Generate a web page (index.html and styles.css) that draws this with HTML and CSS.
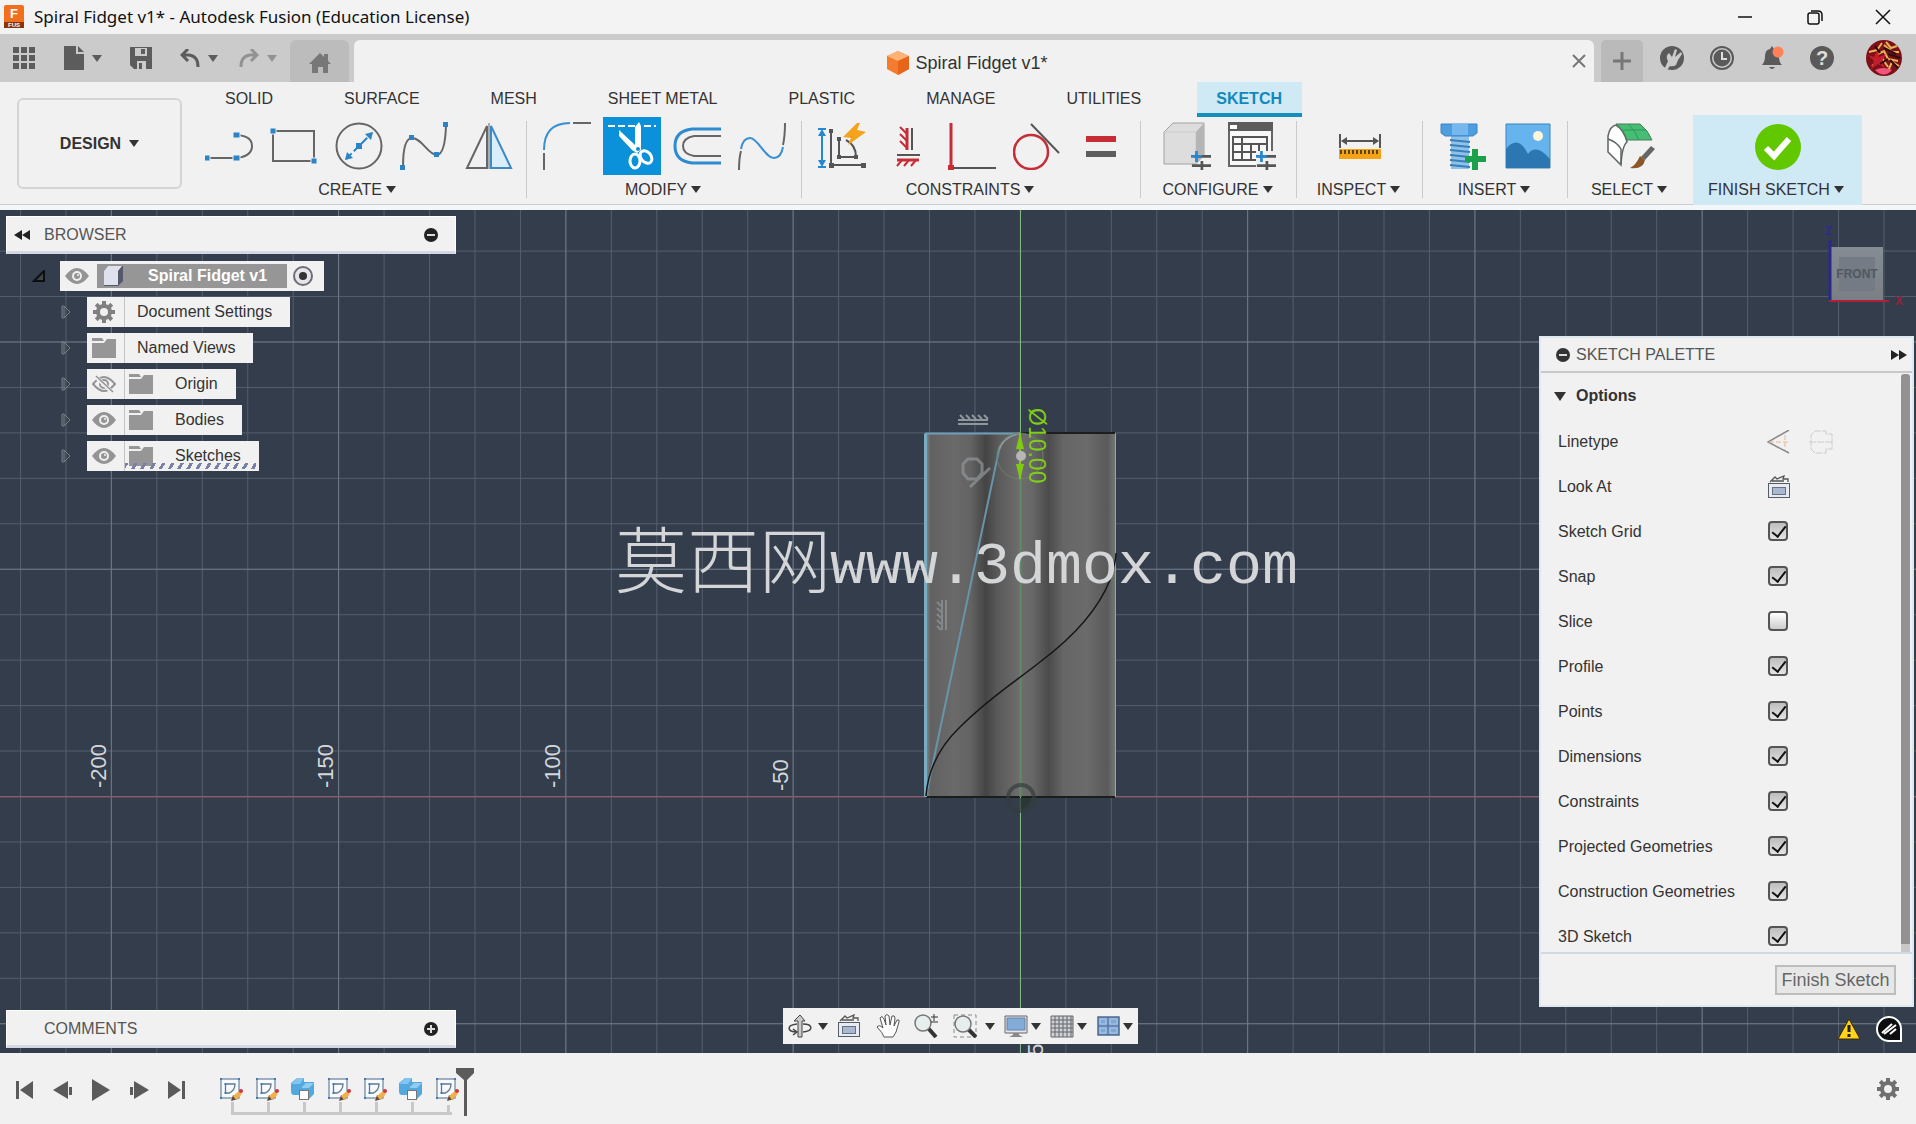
FILE: index.html
```html
<!DOCTYPE html>
<html lang="en">
<head>
<meta charset="utf-8">
<title>Spiral Fidget v1* - Autodesk Fusion</title>
<link rel="stylesheet" href="styles.css">
</head>
<body>
<svg class="defs" aria-hidden="true">
  <symbol id="eye" viewBox="0 0 24 16"><path d="M0 8Q6 0 12 0T24 8Q18 16 12 16T0 8Z" fill="#949494"/><circle cx="12" cy="8" r="5" fill="#f0f0f0"/><circle cx="12" cy="8" r="3" fill="#949494"/><circle cx="13" cy="7" r="1" fill="#f0f0f0"/></symbol>
  <symbol id="eye-off" viewBox="0 0 24 18"><path d="M1 9Q7 2 12 2T23 9Q17 16 12 16T1 9Z" fill="none" stroke="#949494" stroke-width="2"/><circle cx="12" cy="9" r="4" fill="none" stroke="#949494" stroke-width="2"/><path d="M3 1L20 17" stroke="#f0f0f0" stroke-width="4"/><path d="M4 1L21 17" stroke="#949494" stroke-width="1.500"/></symbol>
  <symbol id="folder" viewBox="0 0 24 20"><path d="M0 0h10l2 3H0zM0 5h12l3-4h9v19H0z" fill="#969696"/></symbol>
  <symbol id="gear" viewBox="0 0 24 24"><path d="M10 1h4v4h-4zM10 19h4v4h-4zM1 10h4v4H1zM19 10h4v4h-4z"/><path d="M10 1h4v4h-4zM10 19h4v4h-4zM1 10h4v4H1zM19 10h4v4h-4z" transform="rotate(45 12 12)"/><path fill-rule="evenodd" d="M12 4a8 8 0 1 0 0 16a8 8 0 1 0 0-16zM12 8a4 4 0 1 1 0 8a4 4 0 1 1 0-8z"/></symbol>
  <symbol id="lookat" viewBox="0 0 24 24"><rect x="1.500" y="8.500" width="21" height="14" fill="#e8ecf2" stroke="#555c66"/><rect x="5.500" y="12.500" width="13" height="7" fill="#a9b9d2" stroke="#68717f"/><path d="M3 7L8 2l2 2L17 1l-1 3h5v3M5 6h12" fill="none" stroke="#555" stroke-width="1.300"/></symbol>
  <symbol id="tl-sketch" viewBox="0 0 24 24"><rect x="2" y="2" width="18" height="19" fill="#f7fbff" stroke="#7589a0" stroke-width="1.300"/><path d="M6.500 7v9h4Q16 13 16 7z" fill="none" stroke="#64788a" stroke-width="1.300"/><path d="M1 1h2v2H1zM19 1h2v2h-2zM1 20h2v2H1zM5.500 6h2v2h-2zM5.500 15h2v2h-2z" fill="#3f7cb8"/><path d="M12 24l2-6 5 4z" fill="#5c4a3a"/><path d="M14 19l6-5 3 3-6 6z" fill="#f3b04a"/><circle cx="22" cy="14" r="2" fill="#cf3440"/></symbol>
  <symbol id="tl-body" viewBox="0 0 24 24"><path d="M0 6l6-5h7v4h10v12l-5 5H9v-4H3q-3 0-3-4z" fill="#51a9e0"/><path d="M0 7l6-6h7L9 7z" fill="#83c5ee"/><path d="M11 10l4-4h8l-5 5h-7z" fill="#90cdf2"/><rect x="8.500" y="13.500" width="9" height="9" fill="#fff" stroke="#777"/></symbol>
  <symbol id="param" viewBox="0 0 22 22"><path d="M3 6h19M1 16h21" stroke="#555" stroke-width="3"/><path d="M6 0v12M0 6h12" stroke="#2a86cc" stroke-width="3"/><path d="M12 11v11" stroke="#555" stroke-width="3"/></symbol>
</svg>

<header class="titlebar">
  <svg class="app-logo" width="22" height="26" viewBox="0 0 22 26"><rect x="1" y="1" width="20" height="23" rx="2" fill="#f2701b"/><path d="M1 18h20v6H1z" fill="#8a3407"/><text x="7" y="14" class="logo-letter">F</text><text x="5" y="23" class="logo-sub">FUS</text></svg>
  <h1>Spiral Fidget v1* - Autodesk Fusion (Education License)</h1>
  <div class="window-buttons">
    <button type="button" aria-label="Minimize"><svg width="16" height="16"><path d="M1 8h14" stroke="#111" stroke-width="1.500"/></svg></button>
    <button type="button" aria-label="Restore"><svg width="16" height="16" fill="none" stroke="#111" stroke-width="1.500"><rect x="1" y="4" width="11" height="11" rx="2"/><path d="M4 2h7q4 0 4 4v6"/></svg></button>
    <button type="button" aria-label="Close"><svg width="16" height="16"><path d="M1 1l14 14M15 1L1 15" stroke="#111" stroke-width="1.500"/></svg></button>
  </div>
</header>

<nav class="appbar">
  <div class="quick">
    <button type="button" aria-label="Data panel"><svg width="22" height="22" fill="#5c5c5c"><path d="M0 0h6v6H0zM8 0h6v6H8zM16 0h6v6h-6zM0 8h6v6H0zM8 8h6v6H8zM16 8h6v6h-6zM0 16h6v6H0zM8 16h6v6H8zM16 16h6v6h-6z"/></svg></button>
    <button type="button" class="with-caret file" aria-label="File"><svg width="20" height="24" fill="#5c5c5c"><path d="M0 0h12v8h8v16H0zM14 0l6 6h-6z"/></svg><i class="caret"></i></button>
    <button type="button" class="save" aria-label="Save"><svg width="22" height="22"><path d="M0 0h22v22H4l-4-4z" fill="#5c5c5c"/><path d="M5 1h12v8H5zM7 14h9v8H7z" fill="#cbcbcb"/><path d="M11 2h4v5h-4zM9 16h3v6H9z" fill="#5c5c5c"/></svg></button>
    <button type="button" class="with-caret" aria-label="Undo"><svg width="20" height="18" fill="none" stroke="#5c5c5c" stroke-width="3"><path d="M8 0L2 6l6 6M2 6h7q9 1 9 12"/></svg><i class="caret"></i></button>
    <button type="button" class="with-caret redo" aria-label="Redo"><svg width="20" height="18" fill="none" stroke="#929292" stroke-width="3"><path d="M12 0l6 6-6 6M18 6h-7Q2 7 2 18"/></svg><i class="caret"></i></button>
  </div>
  <button type="button" class="home" aria-label="Home"><svg width="22" height="22" fill="#777"><path d="M0 12L11 1l4 4V2h4v7l3 3h-3v9h-5v-6H9v6H3v-9z"/></svg></button>
  <div class="doc-tab">
    <div class="doc-name"><svg width="24" height="26" viewBox="0 0 24 26"><path d="M1 6L12 1l11 5v13l-11 6L1 19z" fill="#f47c2e"/><path d="M1 6L12 1l11 5-11 5z" fill="#fdb375"/><path d="M12 11l11-5v13l-11 6z" fill="#e76418"/></svg><span>Spiral Fidget v1*</span></div>
    <button type="button" aria-label="Close tab"><svg width="14" height="14"><path d="M1 1l12 12M13 1L1 13" stroke="#777" stroke-width="2"/></svg></button>
  </div>
  <button type="button" class="new-tab" aria-label="New tab"><svg width="20" height="20"><path d="M10 1v18M1 10h18" stroke="#777" stroke-width="3"/></svg></button>
  <div class="status">
    <button type="button" aria-label="Extensions"><svg width="24" height="24"><circle cx="12" cy="12" r="12" fill="#5a5a5a"/><path d="M4 24l4-9q-3-5 1-8l3 4 3-8 2 1-2 7 6-5 1 2-4 6-2 5q-3 2-6 1l-3 4z" fill="#cbcbcb"/></svg></button>
    <button type="button" aria-label="Job status"><svg width="24" height="24" fill="none"><circle cx="12" cy="12" r="11" stroke="#5a5a5a" stroke-width="2"/><circle cx="12" cy="12" r="8.500" fill="#5a5a5a"/><path d="M12 6v7h5" stroke="#ddd" stroke-width="2"/></svg></button>
    <button type="button" aria-label="Notifications"><svg width="24" height="24"><path d="M2 19q3-3 3-9 0-6 5-7l2-3 2 3q5 2 5 8 0 5 3 8zM9 21h6q-3 4-6 0z" fill="#5a5a5a"/><circle cx="18" cy="6" r="5.500" fill="#ff8157"/></svg></button>
    <button type="button" aria-label="Help"><svg width="24" height="24"><circle cx="12" cy="12" r="12" fill="#5a5a5a"/><text x="12" y="19" class="help-mark">?</text></svg></button>
    <button type="button" class="avatar" aria-label="Account"><svg width="36" height="36"><circle cx="18" cy="18" r="18" fill="#7d1019"/><path d="M20 2l5 6 6-2M18 5l8 7 7 0M3 12l8-2 5-7M10 15l8-4 4 8 10 2M6 26l10-8 6 9M22 31l4-9 7 4" fill="none" stroke="#e9b35a" stroke-width="2"/><path d="M2 15l6 2 4-8 1 8 7-3-4 7 3 7-7-4-7 5 3-8z" fill="#c41e2c"/><path d="M18 8l12 6M22 14l12 4M24 20l8 8M9 6l5 7M14 24l8-5" stroke="#2c0c0c" stroke-width="2"/><path d="M9 30q8-4 17 0-8 9-17 0z" fill="#f0567d"/></svg></button>
  </div>
</nav>

<section class="ribbon">
  <div class="workspace"><button type="button">DESIGN<i class="caret"></i></button></div>
  <div class="ribbon-main">
    <div class="tabs">
      <button type="button">SOLID</button><button type="button">SURFACE</button><button type="button">MESH</button><button type="button">SHEET METAL</button><button type="button">PLASTIC</button><button type="button">MANAGE</button><button type="button">UTILITIES</button><button type="button" class="active">SKETCH</button>
    </div>
    <div class="groups">
      <div class="group create">
        <div class="tools">
          <button type="button" aria-label="Line"><svg width="48" height="48"><path d="M2 36h30q15-2 15-12T32 13" fill="none" stroke="#666" stroke-width="2"/><path d="M-1 33h6v6h-6zM28 33h7v6h-7zM28 10h7v6h-7z" fill="#2a84c6" stroke="#f0f0f0"/></svg></button>
          <button type="button" aria-label="Rectangle"><svg width="48" height="48"><path d="M3 9h41v30H3z" fill="none" stroke="#666" stroke-width="2"/><path d="M0 6h6v6H0zM41 36h6v6h-6z" fill="#2a84c6" stroke="#f0f0f0"/></svg></button>
          <button type="button" aria-label="Circle"><svg width="48" height="48"><circle cx="24" cy="24" r="22.500" fill="none" stroke="#666" stroke-width="2"/><path d="M11 37l26-26" stroke="#2a84c6" stroke-width="2" stroke-dasharray="8 3"/><path d="M38 10l-2 8-6-6zM10 38l2-8 6 6zM21 21h6v6h-6z" fill="#2a84c6"/></svg></button>
          <button type="button" aria-label="Spline"><svg width="48" height="48"><path d="M3 45Q3 16 12 16C22 16 28 33 37 33Q45 32 46 4" fill="none" stroke="#666" stroke-width="2"/><path d="M0 43h5v5H0zM9 13h5v5H9zM34 30h5v5h-5zM43 0h5v5h-5z" fill="#2a84c6"/></svg></button>
          <button type="button" aria-label="Mirror"><svg width="48" height="48"><path d="M22 4v42H2z" fill="none" stroke="#666" stroke-width="2"/><path d="M26 4v42h20z" fill="#d9edfb" stroke="#3d8bc2" stroke-width="2"/><path d="M24 1v46" stroke="#666"/></svg></button>
        </div>
        <button type="button" class="label">CREATE<i class="caret"></i></button>
      </div>
      <div class="group modify">
        <div class="tools">
          <button type="button" aria-label="Fillet"><svg width="48" height="48" fill="none" stroke-width="2"><path d="M1 28Q1 1 27 1" stroke="#3a8fd0"/><path d="M1 31v17M30 1h18" stroke="#666"/></svg></button>
          <button type="button" class="selected" aria-label="Trim"><svg width="48" height="48"><path d="M0 4h27M36 4h12" stroke="#fff" stroke-width="2" stroke-dasharray="7 3"/><path d="M27 5l4-5 2 4v24l-4 3-5-3L11 14V8l16 15z" fill="#fff"/><g fill="none" stroke="#fff" stroke-width="3"><ellipse cx="27" cy="39" rx="5" ry="7"/><ellipse cx="38" cy="35" rx="5" ry="7" transform="rotate(-40 38 35)"/></g><circle cx="30" cy="27" r="2" fill="#0b91d9"/></svg></button>
          <button type="button" aria-label="Offset"><svg width="48" height="48" fill="none"><path d="M48 7H19Q2 9 2 24t17 17h29" stroke="#2f8bd0" stroke-width="3"/><path d="M48 14H21q-11 2-11 10t11 10h27" stroke="#666" stroke-width="2"/></svg></button>
          <button type="button" aria-label="Extend curve"><svg width="48" height="48" fill="none" stroke-width="2"><path d="M1 48q0-12 2-19M45 23Q47 14 47 1" stroke="#666"/><path d="M3 27Q5 16 12 16C20 16 27 36 36 36Q43 36 45 25" stroke="#3a8fd0"/></svg></button>
        </div>
        <button type="button" class="label">MODIFY<i class="caret"></i></button>
      </div>
      <div class="group constraints">
        <div class="tools">
          <button type="button" aria-label="Dimension"><svg width="48" height="48" fill="none"><path d="M4 10v32M0 7h8M0 45h8" stroke="#2488d0" stroke-width="2"/><path d="M4 7l4 7H0zM4 45l4-7H0z" fill="#2488d0"/><path d="M13 9v34h33M21 17v18h17Q38 23 28 18" stroke="#555" stroke-width="2"/><path d="M11 7h4v4h-4zM11 41h5v5h-5zM43 41h5v5h-5zM19 15h4v4h-4zM19 33h4v4h-4zM36 33h4v4h-4z" fill="#555"/><path d="M39 1L25 15l8 1-3 7 18-13-9-2 3-7z" fill="#f5a31a"/></svg></button>
          <button type="button" aria-label="Horizontal/Vertical"><svg width="48" height="48"><path d="M24 6v22" stroke="#c62d37" stroke-width="3"/><path d="M29 6v22M14 33h23" stroke="#555" stroke-width="2"/><path d="M14 38h22" stroke="#c62d37" stroke-width="3"/><path d="M17 5l7 7M17 12l7 7M17 19l7 7M14 44l5-6M21 44l5-6M28 44l5-6" stroke="#c62d37" stroke-width="2"/></svg></button>
          <button type="button" aria-label="Perpendicular"><svg width="48" height="48"><path d="M3 1v42" stroke="#c62d37" stroke-width="3"/><path d="M6 46h42" stroke="#555" stroke-width="2"/><path d="M0 43h6v5H0z" fill="#c62d37"/></svg></button>
          <button type="button" aria-label="Tangent"><svg width="48" height="48" fill="none"><circle cx="18" cy="30" r="17" stroke="#c62d37" stroke-width="2.500"/><path d="M18 2l28 29" stroke="#555" stroke-width="2"/></svg></button>
          <button type="button" aria-label="Equal"><svg width="48" height="48"><path d="M8 14h30v6H8z" fill="#c62d37"/><path d="M8 29h30v6H8z" fill="#5e5e5e"/></svg></button>
        </div>
        <button type="button" class="label">CONSTRAINTS<i class="caret"></i></button>
      </div>
      <div class="group configure">
        <div class="tools">
          <button type="button" aria-label="Configure"><svg width="48" height="48"><path d="M1 10L10 1h31v32l-8 9H1z" fill="#ddd" stroke="#a2a2a2"/><path d="M1 10h32v32" fill="none" stroke="#ccc"/><path d="M33 10l8-9v32l-8 9z" fill="#b5b5b5"/><use href="#param" x="28" y="29" width="20" height="20"/></svg></button>
          <button type="button" aria-label="Configuration table"><svg width="48" height="48"><path d="M1 1h43v43H1z" fill="#f8f8f8" stroke="#666" stroke-width="2"/><path d="M0 0h45v9H0z" fill="#5c5c5c"/><path d="M2 3h7v4H2z" fill="#fff"/><path d="M5 15h34v23H5zM5 22h34M5 30h34M14 15v23M23 22v16M31 22v16" fill="none" stroke="#555" stroke-width="2"/><path d="M28 29h20v19H28z" fill="#f0f0f0"/><use href="#param" x="28" y="29" width="20" height="20"/></svg></button>
        </div>
        <button type="button" class="label">CONFIGURE<i class="caret"></i></button>
      </div>
      <div class="group inspect">
        <div class="tools">
          <button type="button" aria-label="Measure"><svg width="48" height="48"><path d="M4 12v14M44 12v14M6 19h36" stroke="#555" stroke-width="2"/><path d="M5 19l6-4v8zM43 19l-6-4v8z" fill="#555"/><path d="M3 27h42v10H3z" fill="#f6a313"/><path d="M5 28v4M9 28v4M13 28v4M17 28v4M21 28v4M25 28v4M29 28v4M33 28v4M37 28v4M41 28v4" stroke="#5c4315" stroke-width="2"/></svg></button>
        </div>
        <button type="button" class="label">INSPECT<i class="caret"></i></button>
      </div>
      <div class="group insert">
        <div class="tools">
          <button type="button" aria-label="Insert fastener"><svg width="48" height="48"><path d="M12 13h18v34H12z" fill="#8fc2eb"/><path d="M11 18l20 2M11 23l20 2M11 28l20 2M11 33l20 2M11 38l20 2M11 43l20 2" stroke="#397fb8" stroke-width="2"/><path d="M2 2h36v9l-4 3H6l-4-3z" fill="#4d9ddf" stroke="#3d84c2"/><path d="M13 2h16v11H13z" fill="#75b8ee"/><path d="M36 27v21M26 37h21" stroke="#1ba04c" stroke-width="6"/></svg></button>
          <button type="button" aria-label="Insert canvas"><svg width="48" height="48"><path d="M2 2h44v44H2z" fill="#65b4ed" stroke="#3d85bd"/><path d="M2 27Q14 12 24 32q8-11 22 5v9H2z" fill="#2c77b1"/><circle cx="34" cy="14" r="5" fill="#fff7d7"/></svg></button>
        </div>
        <button type="button" class="label">INSERT<i class="caret"></i></button>
      </div>
      <div class="group select">
        <div class="tools">
          <button type="button" aria-label="Select"><svg width="48" height="48"><path d="M1 14Q3 4 9 3Q17 8 20 20Q15 24 14 43L1 30z" fill="#fff" stroke="#5f6661" stroke-width="1.500"/><path d="M1 17q9 3 13 10v15" fill="none" stroke="#5f6661" stroke-width="1.500"/><path d="M9 2h24q8 6 12 16H20Q17 8 9 2z" fill="#45bd73" stroke="#4c7c5c"/><path d="M21 2q7 6 11 16M14 8h25" fill="none" stroke="#2e995a"/><path d="M44 24l4 3-10 11-4-3z" fill="#666"/><path d="M33 34l5 4q-2 10-15 8 6-3 10-12z" fill="#8b5726"/></svg></button>
        </div>
        <button type="button" class="label">SELECT<i class="caret"></i></button>
      </div>
      <div class="group finish">
        <div class="tools">
          <button type="button" aria-label="Finish Sketch"><svg width="48" height="48"><circle cx="24" cy="25" r="23" fill="#61c800"/><path d="M12 26l8 8 15-17" fill="none" stroke="#fff" stroke-width="6"/></svg></button>
        </div>
        <button type="button" class="label">FINISH SKETCH<i class="caret"></i></button>
      </div>
    </div>
  </div>
</section>

<main class="viewport">
  <svg class="scene" viewBox="0 210 1916 843" preserveAspectRatio="xMidYMid slice">
    <defs>
      <pattern id="minor" x="20" y="796" width="45.450" height="45.450" patternUnits="userSpaceOnUse"><path d="M.5 0v46M0 .5h46" stroke="#78859a" stroke-opacity=".45"/></pattern>
      <pattern id="major" x="110.800" y="796" width="227.270" height="227.270" patternUnits="userSpaceOnUse"><path d="M.5 0v228M0 .5h228" stroke="#93a0b0" stroke-opacity=".45"/></pattern>
      <linearGradient id="metal"><stop offset="0" stop-color="#85949b"/><stop offset=".03" stop-color="#616161"/><stop offset=".15" stop-color="#6a6a6a"/><stop offset=".24" stop-color="#636363"/><stop offset=".32" stop-color="#444"/><stop offset=".38" stop-color="#595959"/><stop offset=".5" stop-color="#6e6e6e"/><stop offset=".57" stop-color="#666"/><stop offset=".65" stop-color="#4b4b4b"/><stop offset=".73" stop-color="#666"/><stop offset=".85" stop-color="#6b6b6b"/><stop offset=".96" stop-color="#5a5a5a"/><stop offset="1" stop-color="#707870"/></linearGradient>
      <linearGradient id="cube" x2="0" y2="1"><stop stop-color="#858c94"/><stop offset="1" stop-color="#7a7f85"/></linearGradient>
    </defs>
    <rect y="210" width="1916" height="843" fill="#343d4c"/>
    <rect y="210" width="1916" height="843" fill="url(#minor)"/>
    <rect y="210" width="1916" height="843" fill="url(#major)"/>
    <path d="M0 797h1916" stroke="#934a54"/>
    <g class="axis">
      <text transform="translate(106 788) rotate(-90)">-200</text>
      <text transform="translate(333 788) rotate(-90)">-150</text>
      <text transform="translate(560 788) rotate(-90)">-100</text>
      <text transform="translate(788 791) rotate(-90)">-50</text>
      <text transform="translate(1043 1063) rotate(-90)">-50</text>
    </g>
    <rect x="925" y="433" width="190" height="364" fill="url(#metal)"/>
    <path d="M1020 433h95M926 797h189" stroke="#1d1d1d" stroke-width="2"/>
    <path d="M1115.500 433v364" stroke="#9ba79c"/>
    <path d="M1020.500 210v223M1020.500 797v256" stroke="#7fb686"/>
    <path d="M1020.500 433v364" stroke="#5f8d60" stroke-width="2"/>
    <circle cx="1021" cy="798" r="13" fill="none" stroke="#333d3c" stroke-width="4" opacity=".7"/>
    <path d="M1020 798h11a11 11 0 0 1-11 11z" fill="#28352f" opacity=".7"/>
    <path d="M925.500 797V433.500" fill="none" stroke="#79abc1" stroke-width="3"/>
    <path d="M925 433.500H1018" fill="none" stroke="#6f9fb6" stroke-width="2"/>
    <path d="M1020 433Q1003 437 999 450" fill="none" stroke="#8b979c" stroke-width="2"/>
    <path d="M999 450L926 796" fill="none" stroke="#6895ab" stroke-width="2"/>
    <circle cx="1020" cy="456" r="23" fill="none" stroke="#6c7f66"/>
    <path d="M926 796C928 770 938 748 960 727C990 697 1015 682 1040 662C1080 632 1100 605 1110 580C1114 568 1116 560 1116 553" fill="none" stroke="#161616" stroke-width="1.500"/>
    <path d="M1020 433v46" stroke="#7dcc12" stroke-width="2"/><path d="M1020 433l4 16h-8zM1020 480l4-16h-8z" fill="#7dcc12"/><circle cx="1021" cy="456" r="5" fill="#b6b6b6"/>
    <g fill="none" stroke="#8f979d" stroke-width="2"><path d="M958 424h30M958 420h30M960 415l4 4M966 415l4 4M972 415l4 4M978 415l4 4M984 415l4 4"/></g>
    <g fill="none" stroke="#92979a" stroke-width="2" opacity=".7"><path d="M946 600v30M942 600v30M937 602l4 4M937 608l4 4M937 614l4 4M937 620l4 4M937 626l4 4"/><path d="M968 459h9l5 5v9l-5 6h-9l-5-6v-9zM970 487l20-19" stroke-width="3"/></g>
    <text class="dimension" transform="translate(1029 408) rotate(90)">Ø10.00</text>
    <text class="watermark"><tspan class="cjk" x="615" y="587">莫西网</tspan><tspan x="830" y="583">www.3dmox.com</tspan></text>
    <g><rect x="1831" y="247" width="52" height="53" fill="url(#cube)"/><rect x="1839" y="257" width="36" height="34" fill="#747b85"/><text x="1857" y="278" class="cube-text">FRONT</text><path d="M1830 240v60" stroke="#29298c" stroke-width="3"/><path d="M1829 301h60" stroke="#b31d35" stroke-width="2"/><text x="1825" y="235" class="axis-z">Z</text><text x="1895" y="305" class="axis-x">X</text></g>
  </svg>

  <aside class="browser">
    <div class="bar"><svg width="16" height="10" fill="#222"><path d="M8 0v10L0 5zM16 0v10L8 5z"/></svg><h2>BROWSER</h2><button type="button" aria-label="Collapse browser"><svg width="14" height="14"><circle cx="7" cy="7" r="7" fill="#222"/><path d="M3 7h8" stroke="#ddd" stroke-width="2"/></svg></button></div>
    <ul class="tree">
      <li class="root"><svg width="13" height="12"><path d="M12 1v10H2z" fill="#444" stroke="#0c0f13" stroke-width="2"/></svg>
        <div class="node"><span class="cell"><svg width="24" height="16"><use href="#eye"/></svg></span><span class="root-name"><svg width="22" height="22"><path d="M1 6l4-5h15v15l-5 5H1z" fill="#55586a"/><path d="M1 6l4-5h14l-4 5v14H1z" fill="#dfe1ec"/></svg><b>Spiral Fidget v1</b></span><svg class="radio" width="20" height="20"><circle cx="10" cy="10" r="9" fill="#e5e5ec" stroke="#6d6d77" stroke-width="2"/><circle cx="10" cy="10" r="4" fill="#333"/></svg></div></li>
      <li><svg class="twist" width="10" height="14"><path d="M1 1h2l6 6-6 6H1z"/><path d="M3 2v10"/></svg><div class="node"><span class="cell"><svg width="24" height="24" fill="#808080"><use href="#gear"/></svg></span><span class="name">Document Settings</span></div></li>
      <li><svg class="twist" width="10" height="14"><path d="M1 1h2l6 6-6 6H1z"/><path d="M3 2v10"/></svg><div class="node"><span class="cell"><svg width="24" height="20"><use href="#folder"/></svg></span><span class="name">Named Views</span></div></li>
      <li><svg class="twist" width="10" height="14"><path d="M1 1h2l6 6-6 6H1z"/><path d="M3 2v10"/></svg><div class="node"><span class="cell"><svg width="24" height="18"><use href="#eye-off"/></svg></span><svg class="folder" width="24" height="20"><use href="#folder"/></svg><span class="name deep">Origin</span></div></li>
      <li><svg class="twist" width="10" height="14"><path d="M1 1h2l6 6-6 6H1z"/><path d="M3 2v10"/></svg><div class="node"><span class="cell"><svg width="24" height="16"><use href="#eye"/></svg></span><svg class="folder" width="24" height="20"><use href="#folder"/></svg><span class="name deep">Bodies</span></div></li>
      <li><svg class="twist" width="10" height="14"><path d="M1 1h2l6 6-6 6H1z"/><path d="M3 2v10"/></svg><div class="node hatched"><span class="cell"><svg width="24" height="16"><use href="#eye"/></svg></span><svg class="folder" width="24" height="20"><use href="#folder"/></svg><span class="name deep">Sketches</span></div></li>
    </ul>
  </aside>

  <aside class="palette">
    <div class="palette-head"><svg width="14" height="14"><circle cx="7" cy="7" r="7" fill="#333"/><path d="M3 7h8" stroke="#ddd" stroke-width="2"/></svg><h2>SKETCH PALETTE</h2><svg width="16" height="10" fill="#222"><path d="M0 0v10l8-5zM8 0v10l8-5z"/></svg></div>
    <div class="palette-body">
      <h3><i class="caret big"></i>Options</h3>
      <div class="row"><span>Linetype</span><svg width="24" height="24" fill="none"><path d="M22 0L1 12l21 11" stroke="#888" stroke-width="1.500"/><path d="M2 12h21M18 5v15" stroke="#edb98d" stroke-dasharray="5 2"/></svg><svg class="second" width="24" height="24" fill="none" stroke="#ccc"><path d="M17 4V1H6L2 5v14l4 4h11v-4h6V4zM0 12h24" stroke-dasharray="7 1"/></svg></div>
      <div class="row"><span>Look At</span><svg width="24" height="24"><use href="#lookat"/></svg></div>
      <label class="row"><span>Sketch Grid</span><input type="checkbox" checked></label>
      <label class="row"><span>Snap</span><input type="checkbox" checked></label>
      <label class="row"><span>Slice</span><input type="checkbox"></label>
      <label class="row"><span>Profile</span><input type="checkbox" checked></label>
      <label class="row"><span>Points</span><input type="checkbox" checked></label>
      <label class="row"><span>Dimensions</span><input type="checkbox" checked></label>
      <label class="row"><span>Constraints</span><input type="checkbox" checked></label>
      <label class="row"><span>Projected Geometries</span><input type="checkbox" checked></label>
      <label class="row"><span>Construction Geometries</span><input type="checkbox" checked></label>
      <label class="row"><span>3D Sketch</span><input type="checkbox" checked></label>
      <div class="scrollbar"></div>
    </div>
    <div class="palette-foot"><button type="button">Finish Sketch</button></div>
  </aside>

  <div class="comments bar"><h2>COMMENTS</h2><button type="button" aria-label="Expand comments"><svg width="14" height="14"><circle cx="7" cy="7" r="7" fill="#222"/><path d="M3 7h8M7 3v8" stroke="#ddd" stroke-width="2"/></svg></button></div>

  <div class="navbar">
    <button type="button" class="with-caret" aria-label="Orbit"><svg width="24" height="24" fill="none" stroke="#444"><path d="M10 23V7H6l6-6 5 6h-3v16z" fill="#ccc"/><path d="M9 10C-2 11-1 18 9 18M15 18c11-1 10-8 0-8M5 15l4 3-4 3" stroke-width="1.500"/></svg><i class="caret"></i></button>
    <button type="button" class="look" aria-label="Look At"><svg width="24" height="24"><use href="#lookat"/></svg></button>
    <button type="button" class="pan" aria-label="Pan"><svg width="24" height="24"><path d="M8 23q-1-4-7-10 2-3 6 1L4 4q2-3 4 1l2 6-1-9q2-3 4 0l1 9 2-9q3-1 3 2l-1 8 3-6q3-1 2 2l-3 10-3 5z" fill="#fff" stroke="#555"/></svg></button>
    <button type="button" class="zoom" aria-label="Zoom"><svg width="24" height="24"><path d="M14 14l8 9" stroke="#333" stroke-width="4"/><circle cx="9" cy="9" r="8" fill="#e6eeee" stroke="#777" stroke-width="1.500"/><path d="M17 3h7M20 0v7M17 8h7" stroke="#333"/></svg></button>
    <button type="button" class="with-caret fit" aria-label="Zoom window"><svg width="24" height="24"><path d="M1 1h22v22H1z" fill="none" stroke="#888" stroke-dasharray="4 3"/><path d="M15 15l8 8" stroke="#333" stroke-width="4"/><circle cx="10" cy="10" r="8" fill="#e6eeee" stroke="#777" stroke-width="1.500"/></svg><i class="caret"></i></button>
    <button type="button" class="with-caret tight" aria-label="Display settings"><svg width="24" height="24"><path d="M1 2h22v17H1z" fill="#e2e5eb" stroke="#666"/><path d="M3 4h18v12H3z" fill="#83abd7" stroke="#6582a7"/><path d="M9 19h6v2l4 2H5l4-2z" fill="#888"/></svg><i class="caret"></i></button>
    <button type="button" class="with-caret tight" aria-label="Grid settings"><svg width="24" height="24"><path d="M1 2h22v21H1z" fill="#ccd0d8"/><path d="M1 2h22v21H1zM1 6h22M1 10h22M1 14h22M1 18h22M5 2v21M9 2v21M13 2v21M17 2v21M21 2v21" fill="none" stroke="#666"/></svg><i class="caret"></i></button>
    <button type="button" class="with-caret tight" aria-label="Viewports"><svg width="24" height="24"><path d="M2 3h21v18H2z" fill="#80a8d7" stroke="#4e6a91" stroke-width="1.500"/><path d="M12 3v18M2 12h21" stroke="#4e6a91"/><path d="M4 5h6v5H4zM14 5h7v5h-7zM4 14h6v5H4zM14 14h7v5h-7z" fill="none" stroke="#adc9e8"/></svg><i class="caret"></i></button>
  </div>

  <div class="alerts"><svg width="24" height="22"><path d="M12 1l11 20H1z" fill="#ffd31c" stroke="#3a2a00"/><path d="M12 7v7M12 16v3" stroke="#222" stroke-width="3"/></svg><svg width="26" height="26"><path d="M13 1a12 12 0 1 0 0 24h12V13A12 12 0 0 0 13 1z" fill="#0d0e10" stroke="#fff" stroke-width="2"/><path d="M6 17L16 8M8 18l12-9M14 18l6-5" stroke="#fff" stroke-width="2"/></svg></div>
</main>

<footer class="timeline">
  <div class="playback">
    <button type="button" aria-label="Go to start"><svg width="18" height="18"><path d="M0 0h3v18H0zM17 0v18L4 9z"/></svg></button>
    <button type="button" aria-label="Step back"><svg width="20" height="18"><path d="M15 0v18L0 9zM16 6h3v8h-3z"/></svg></button>
    <button type="button" aria-label="Play"><svg width="18" height="22"><path d="M0 0v22l18-11z"/></svg></button>
    <button type="button" aria-label="Step forward"><svg width="20" height="18"><path d="M5 0v18l15-9zM1 6h3v8H1z"/></svg></button>
    <button type="button" aria-label="Go to end"><svg width="18" height="18"><path d="M14 0h3v18h-3zM0 0v18l13-9z"/></svg></button>
  </div>
  <ol class="features">
    <li><svg width="24" height="24"><use href="#tl-sketch"/></svg></li><li><svg width="24" height="24"><use href="#tl-sketch"/></svg></li><li><svg width="24" height="24"><use href="#tl-body"/></svg></li><li><svg width="24" height="24"><use href="#tl-sketch"/></svg></li><li><svg width="24" height="24"><use href="#tl-sketch"/></svg></li><li><svg width="24" height="24"><use href="#tl-body"/></svg></li><li><svg width="24" height="24"><use href="#tl-sketch"/></svg></li>
  </ol>
  <svg class="marker" width="18" height="48"><path d="M0 0h18v5l-7 7v36H8V12L0 5z" fill="#5b5b5b"/></svg>
  <button type="button" class="settings" aria-label="Timeline settings"><svg width="24" height="24" fill="#707070"><use href="#gear"/></svg></button>
</footer>
</body>
</html>
```
FILE: styles.css
```css
* { box-sizing: border-box; }
html, body { height: 100%; }
body {
  margin: 0;
  display: flex;
  flex-direction: column;
  overflow: hidden;
  background: #f1f1f1;
  color: #333;
  font: 16px/20px "Liberation Sans", Arial, sans-serif;
}
h1, h2, h3, ul, ol { margin: 0; padding: 0; font-size: 16px; font-weight: 400; list-style: none; }
button { margin: 0; padding: 0; border: 0; background: none; color: inherit; font: inherit; display: flex; align-items: center; justify-content: center; }
svg { display: block; flex: none; }
.defs { position: absolute; width: 0; height: 0; }
.caret { flex: none; width: 0; height: 0; border: 5px solid transparent; border-top: 7px solid currentColor; border-bottom: 0; }
.caret.big { border-width: 9px 6px 0; }

/* Window title */
.titlebar { flex: none; display: flex; align-items: center; height: 34px; padding-left: 3px; background: #f3f3f3; color: #111; }
.titlebar h1 { margin-left: 9px; font: 17px/24px "Noto Sans", sans-serif; flex: 1; white-space: nowrap; }
.logo-letter { font: bold 13px "Liberation Sans", sans-serif; fill: #fff; }
.logo-sub { font: bold 6px "Liberation Sans", sans-serif; fill: #fff; }
.window-buttons { display: flex; }
.window-buttons button { width: 70px; height: 34px; }
.window-buttons button:last-child { width: 66px; }

/* Document tab strip */
.appbar { flex: none; display: flex; height: 48px; padding-top: 6px; background: #cbcbcb; color: #5c5c5c; }
.quick { flex: none; display: flex; width: 290px; height: 36px; padding-left: 13px; }
.with-caret { gap: 8px; }
.file { margin-left: 29px; }
.save { margin: 0 28px; }
.redo { margin-left: 21px; color: #929292; }
.home { width: 59px; border-radius: 6px 6px 0 0; background: #bcbcbc; }
.home svg { margin-top: 4px; }
.doc-tab { flex: 1; display: flex; align-items: center; margin: 0 7px 0 5px; border-radius: 6px 6px 0 0; background: #f1f1f1; color: #333; }
.doc-name { flex: 1; display: flex; align-items: center; justify-content: center; gap: 5px; padding: 4px 0 0 16px; font-size: 18px; }
.doc-tab button { width: 30px; height: 40px; }
.new-tab { width: 42px; border-radius: 5px 5px 0 0; background: #bababa; }
.status { display: flex; height: 36px; padding: 0 14px 0 17px; gap: 26px; }
.status .avatar { margin-left: 6px; }
.help-mark { font: bold 20px "Liberation Sans", sans-serif; fill: #ddd; text-anchor: middle; }

/* Ribbon */
.ribbon { flex: none; display: flex; height: 128px; border-bottom: 5px solid #f4f7fa; box-shadow: inset 0 -1px #cfcfcf; }
.workspace { flex: none; width: 190px; padding: 16px 8px 0 17px; }
.workspace button { width: 100%; height: 91px; gap: 8px; border: 2px solid #d4d4d4; border-radius: 6px; font-weight: 700; }
.ribbon-main { flex: 1; }
.tabs { display: flex; height: 33px; }
.tabs button { height: 33px; padding: 0 36px 0 35px; white-space: nowrap; }
.tabs .active { height: 35px; margin: 0 16px 0 20px; padding: 2px 20px 0 19px; border-bottom: 4px solid #168fbd; background: #cfe9f5; color: #1488bd; font-weight: 700; }
.groups { display: flex; height: 90px; }
.group { position: relative; flex: none; display: flex; flex-direction: column; align-items: center; padding-top: 2px; }
.group:not(.finish):not(.select)::after { content: ""; position: absolute; right: 0; top: 6px; width: 1px; height: 77px; background: #cbcbcb; }
.tools { display: flex; gap: 7px; height: 58px; }
.tools button { width: 58px; height: 58px; }
.tools .selected { background: #0b91d9; }
.label { height: 28px; gap: 4px; padding: 1px 3px 0 0; white-space: nowrap; }
.create { width: 337px; }
.modify { width: 275px; }
.constraints { width: 339px; }
.configure { width: 156px; }
.inspect { width: 126px; }
.insert { width: 145px; }
.select { width: 125px; }
.finish { width: 169px; background: #cfe9f5; }

/* Modelling viewport */
.viewport { position: relative; flex: 1; min-height: 0; overflow: hidden; background: #343d4c; }
.scene { position: absolute; inset: 0; width: 100%; height: 100%; }
.axis { font: 22px "Liberation Sans", sans-serif; fill: #d3d7db; }
.dimension { font: 23px "Liberation Sans", sans-serif; fill: #80cc17; }
.watermark { font: 60px "Liberation Mono", monospace; fill: #d3d5d7; }
.watermark .cjk { font: 300 72px "Noto Sans CJK SC", sans-serif; }
.cube-text { font: bold 12px "Liberation Sans", sans-serif; fill: #515860; text-anchor: middle; }
.axis-z { font: bold 12px "Liberation Sans", sans-serif; fill: #2b2b93; }
.axis-x { font: bold 12px "Liberation Sans", sans-serif; fill: #94243a; }

.browser { position: absolute; left: 6px; top: 6px; }
.bar { display: flex; align-items: center; width: 450px; height: 38px; padding: 1px 17px 0 7px; border: 1px solid #fff; border-bottom: 3px solid #d5d8e4; background: #f1f1f1; color: #555; }
.bar h2 { flex: 1; margin-left: 14px; }
.tree { display: flex; flex-direction: column; gap: 6px; padding-top: 7px; }
.tree li { display: flex; align-items: center; height: 30px; padding-left: 55px; gap: 16px; }
.tree .root { padding-left: 26px; gap: 15px; }
.twist { fill: none; stroke: #7c8388; }
.node { display: flex; align-items: center; height: 30px; background: #f1f1f1; }
.cell { display: flex; align-items: center; justify-content: center; width: 38px; height: 30px; padding-right: 4px; border-right: 1px solid #c4c4c4; }
.root .cell { width: 37px; border: 0; }
.root-name { display: flex; align-items: center; gap: 23px; width: 190px; height: 24px; padding-left: 6px; background: #969696; color: #fff; }
.radio { margin: 0 11px 0 6px; }
.name { padding: 0 18px 0 12px; }
.folder { margin-left: 4px; }
.deep { padding-left: 22px; }
.hatched { position: relative; }
.hatched::after { content: ""; position: absolute; left: 38px; right: 3px; bottom: 2px; height: 6px; background: repeating-linear-gradient(120deg, #7980a8 0 3px, transparent 3px 8px); }

.palette { position: absolute; right: 2px; top: 126px; width: 375px; border: 2px solid #dfe8ef; background: #f1f1f1; }
.palette-head { display: flex; align-items: center; height: 35px; padding: 0 5px 0 15px; border-bottom: 2px solid #c8c8c8; color: #555; }
.palette-head h2 { flex: 1; margin-left: 6px; }
.palette-body { position: relative; height: 579px; padding-left: 17px; overflow: hidden; }
.palette-body h3 { display: flex; align-items: center; gap: 10px; height: 46px; margin-left: -4px; font-weight: 700; }
.row { display: flex; align-items: center; height: 45px; }
.row span { width: 209px; }
.row .second { margin-left: 18px; }
.row input { appearance: none; position: relative; width: 20px; height: 20px; margin: 0 0 2px 1px; border: 2px solid #555; border-radius: 4px; background: linear-gradient(#fff, #ccc); }
.row input:checked { background: linear-gradient(#bdbdbd, #e4e4e4); }
.row input:checked::after { content: ""; position: absolute; left: 5px; top: 0; width: 6px; height: 12px; border: solid #111; border-width: 0 2px 2px 0; transform: rotate(38deg); }
.scrollbar { position: absolute; right: 2px; top: 1px; bottom: 0; width: 9px; border-bottom: 8px solid #c8c8c8; border-radius: 3px 3px 0 0; background: #929292; }
.palette-foot { display: flex; justify-content: flex-end; padding: 11px 16px 10px; border-top: 2px solid #d0d8e0; }
.palette-foot button { width: 121px; height: 30px; border: 2px solid #bdbdbd; background: #e7e7e7; color: #666; font-size: 18px; white-space: nowrap; }

.comments { position: absolute; left: 6px; bottom: 5px; padding-left: 23px; }
.navbar { position: absolute; left: 783px; bottom: 9px; display: flex; align-items: center; height: 36px; padding: 0 5px; background: #f1f1f1; }
.navbar .with-caret { gap: 6px; margin-right: 9px; }
.navbar .look { margin-right: 15px; }
.navbar .pan { margin-right: 14px; }
.navbar .zoom { margin-right: 15px; }
.navbar .fit { margin-right: 9px; gap: 8px; }
.navbar .tight { gap: 3px; }
.navbar .with-caret:last-child { margin-right: 0; }
.alerts { position: absolute; right: 14px; bottom: 11px; display: flex; align-items: center; gap: 15px; }

/* Feature timeline */
.timeline { flex: none; display: flex; height: 71px; padding: 0 16px; }
.playback { display: flex; align-items: center; gap: 19px; height: 74px; width: 203px; fill: #5b5b5b; }
.features { position: relative; display: flex; gap: 12px; padding-top: 24px; }
.features li { position: relative; width: 24px; height: 38px; }
.features li::after { content: ""; position: absolute; left: 12px; bottom: 0; width: 38px; height: 10px; border-left: 3px solid #c8c8c8; border-bottom: 3px solid #c8c8c8; }
.features li:last-child::after { width: 3px; border-bottom: 0; }
.marker { margin: 15px 0 0 -3px; }
.settings { margin-left: auto; height: 72px; }
```
